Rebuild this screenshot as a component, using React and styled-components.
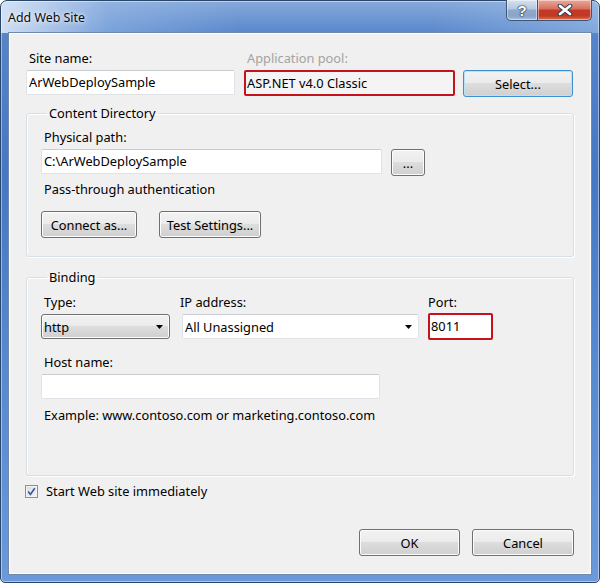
import React from "react";
import styled, { createGlobalStyle } from "styled-components";

const GlobalStyle = createGlobalStyle`
  html, body {
    margin: 0;
    padding: 0;
    background: #ffffff;
  }
  body {
    font-family: "Noto Sans", "Open Sans", sans-serif;
    font-size: 12.8px;
    color: #000;
  }
`;

const Window = styled.div`
  box-sizing: border-box;
  width: 600px;
  height: 583px;
  border: 1px solid #2a4769;
  border-radius: 7px 7px 5px 5px;
  padding: 0 7px 7px 7px;
  display: flex;
  flex-direction: column;
  background:
    linear-gradient(90deg, rgba(220, 232, 248, 0.9) 0%, rgba(160, 192, 234, 0.45) 18%, rgba(80, 128, 200, 0) 40%, rgba(80, 128, 200, 0) 72%, rgba(170, 200, 236, 0.5) 100%) top / 100% 32px no-repeat,
    linear-gradient(180deg, #86a9da 0%, #5584cb 6%, #4677c4 30%, #5588d0 60%, #6b99da 100%);
  box-shadow: inset 0 0 0 1px rgba(255, 255, 255, 0.45);
`;

const TitleBar = styled.div`
  height: 31px;
  flex: none;
  display: flex;
  justify-content: space-between;
  align-items: flex-start;
`;

const Title = styled.div`
  padding-top: 8px;
  font-size: 12.4px;
  color: #0b0b0b;
  text-shadow: 0 0 6px rgba(255, 255, 255, 0.9), 0 0 3px rgba(255, 255, 255, 0.8);
`;

const CaptionButtons = styled.div`
  display: flex;
  margin-top: -1px;
`;

const CaptionButton = styled.div`
  box-sizing: border-box;
  width: ${p => p.w}px;
  height: 21px;
  display: flex;
  align-items: center;
  justify-content: center;
  border: 1px solid #3d5575;
  border-top: none;
  border-radius: ${p => (p.close ? "0 0 5px 0" : "0 0 0 5px")};
  margin-left: ${p => (p.close ? "-1px" : "0")};
  background: ${p =>
    p.close
      ? "linear-gradient(180deg, #e9a99b 0%, #d7705f 45%, #c4392a 50%, #c13a22 80%, #dc7452 100%)"
      : "linear-gradient(180deg, #d6e2f0 0%, #b3c7e0 45%, #8ea9cb 50%, #88a4c8 80%, #a9c2e0 100%)"};
  box-shadow: inset 0 0 0 1px rgba(255, 255, 255, 0.45);
  color: #fff;
  font-family: "Liberation Sans", Arial, sans-serif;
  font-weight: bold;
  font-size: 15px;
  text-shadow: 0 0 1px #1d2f48, 0 0 1px #1d2f48, 0 0 2px #1d2f48;
`;

const Client = styled.div`
  flex: 1;
  box-sizing: border-box;
  background: #f0f0f0;
  border: 1px solid #6e87aa;
  box-shadow: inset 0 0 0 1px #ffffff;
  padding: 17px 17px 0 17px;
  display: flex;
  flex-direction: column;
`;

const TopGrid = styled.div`
  display: grid;
  grid-template-columns: 209px 211px 110px;
  column-gap: 9px;
  align-items: start;
  & > :nth-child(3) {
    margin-left: -1px;
    margin-top: 20px;
  }
`;

const Field = styled.div`
  display: flex;
  flex-direction: column;
`;

const Label = styled.div`
  line-height: 16px;
  height: 16px;
  margin: ${p => p.mt || 0}px 0 ${p => p.mb ?? 4}px ${p => p.offset ?? 3}px;
  color: ${p => (p.disabled ? "#a3a3a3" : "#000")};
  white-space: nowrap;
`;

const TextBox = styled.div`
  box-sizing: border-box;
  width: ${p => p.w}px;
  height: ${p => (p.red ? 26 : 25)}px;
  line-height: 23px;
  padding-left: ${p => (p.red ? 1 : 2)}px;
  background: ${p => (p.readOnly ? "#f4f4f4" : "#ffffff")};
  border: ${p => (p.red ? "2px solid #c4131d" : "1px solid #dfe3e8")};
  border-top-color: ${p => (p.red ? "#c4131d" : "#c9cdd2")};
  border-radius: 2px;
  white-space: nowrap;
  overflow: hidden;
`;

const Button = styled.button`
  box-sizing: border-box;
  width: ${p => p.w}px;
  height: 27px;
  padding: 0;
  font-family: inherit;
  font-size: 12.8px;
  color: #000;
  border: 1px solid ${p => (p.primary ? "#3c8fd0" : "#707070")};
  border-radius: 3px;
  background: linear-gradient(180deg, #f2f2f2 0%, #ebebeb 48%, #dddddd 50%, #cfcfcf 100%);
  box-shadow: inset 0 0 0 1px ${p => (p.primary ? "#b9e2f8" : "#fcfcfc")};
`;

const Group = styled.fieldset`
  margin: ${p => p.top}px 0 0 0;
  padding: ${p => p.pt}px 14px ${p => p.pb}px 14px;
  border: 1px solid #d5dfe5;
  border-radius: 3px;
  box-shadow: inset 1px 1px 0 #ffffff, 1px 1px 0 #ffffff;
  min-width: 0;
`;

const Legend = styled.legend`
  padding: 0 2px;
  margin-left: 6px;
  line-height: 16px;
`;

const Row = styled.div`
  display: flex;
  align-items: ${p => p.align || "flex-start"};
  gap: ${p => p.gap || 0}px;
  margin-top: ${p => p.mt || 0}px;
`;

const Text = styled.div`
  line-height: 16px;
  margin-top: ${p => p.mt || 0}px;
  margin-left: 3px;
  white-space: nowrap;
`;

const ComboBox = styled.div`
  box-sizing: border-box;
  width: ${p => p.w}px;
  height: 25px;
  display: flex;
  align-items: center;
  justify-content: space-between;
  padding: 0 6px 0 2px;
  border: 1px solid ${p => (p.dropList ? "#707070" : "#dfe3e8")};
  border-top-color: ${p => (p.dropList ? "#707070" : "#c9cdd2")};
  border-radius: ${p => (p.dropList ? 3 : 2)}px;
  background: ${p =>
    p.dropList
      ? "linear-gradient(180deg, #f2f2f2 0%, #ebebeb 48%, #dddddd 50%, #cfcfcf 100%)"
      : "#ffffff"};
  box-shadow: ${p => (p.dropList ? "inset 0 0 0 1px #fcfcfc" : "none")};
`;

const Arrow = () => (
  <svg width="7" height="4" viewBox="0 0 7 4">
    <path d="M0 0 H7 L3.5 4 Z" fill="#000" />
  </svg>
);

const HelpGlyph = styled.span`
  line-height: 1;
`;

const CloseGlyph = () => (
  <svg width="16" height="12" viewBox="0 0 16 12">
    <path d="M3 2 L13 10 M13 2 L3 10" stroke="#2a3c55" strokeWidth="4.6" strokeLinecap="round" />
    <path d="M3 2 L13 10 M13 2 L3 10" stroke="#ffffff" strokeWidth="2.8" strokeLinecap="round" />
  </svg>
);

const CheckBox = styled.div`
  box-sizing: border-box;
  width: 13px;
  height: 13px;
  border: 1px solid #8e8f8f;
  background: linear-gradient(135deg, #dcdcdc 0%, #f4f4f4 100%);
  box-shadow: inset 0 0 0 1px #f4f4f4;
  display: flex;
  align-items: center;
  justify-content: center;
  margin-left: -1px;
`;

const Check = () => (
  <svg width="9" height="9" viewBox="0 0 9 9">
    <path d="M1.2 4.6 L3.4 7.4 L7.8 1.2" fill="none" stroke="#3454a0" strokeWidth="1.6" />
  </svg>
);

const CheckLabel = styled.span`
  line-height: 16px;
  margin-left: 8px;
`;

const Footer = styled.div`
  display: flex;
  justify-content: flex-end;
  gap: 12px;
  margin-top: 30px;
`;

export default function App() {
  return (
    <>
      <GlobalStyle />
      <Window>
        <TitleBar>
          <Title>Add Web Site</Title>
          <CaptionButtons>
            <CaptionButton w={32}>
              <HelpGlyph>?</HelpGlyph>
            </CaptionButton>
            <CaptionButton w={55} close>
              <CloseGlyph />
            </CaptionButton>
          </CaptionButtons>
        </TitleBar>
        <Client>
          <TopGrid>
            <Field>
              <Label>Site name:</Label>
              <TextBox w={209}>ArWebDeploySample</TextBox>
            </Field>
            <Field>
              <Label disabled>Application pool:</Label>
              <TextBox w={211} red readOnly>ASP.NET v4.0 Classic</TextBox>
            </Field>
            <Button w={110} primary>Select...</Button>
          </TopGrid>

          <Group top={8} pt={8} pb={18}>
            <Legend>Content Directory</Legend>
            <Label>Physical path:</Label>
            <Row gap={9}>
              <TextBox w={341}>C:\ArWebDeploySample</TextBox>
              <Button w={34}>...</Button>
            </Row>
            <Text mt={5}>Pass-through authentication</Text>
            <Row gap={22} mt={14}>
              <Button w={96}>Connect as...</Button>
              <Button w={102}>Test Settings...</Button>
            </Row>
          </Group>

          <Group top={12} pt={9} pb={52}>
            <Legend>Binding</Legend>
            <Row align="flex-end">
              <Field>
                <Label>Type:</Label>
                <ComboBox w={129} dropList>
                  <span>http</span>
                  <Arrow />
                </ComboBox>
              </Field>
              <Field style={{ marginLeft: 12 }}>
                <Label offset={-2}>IP address:</Label>
                <ComboBox w={237}>
                  <span>All Unassigned</span>
                  <Arrow />
                </ComboBox>
              </Field>
              <Field style={{ marginLeft: 9, marginBottom: -1 }}>
                <Label offset={0} mb={3}>Port:</Label>
                <TextBox w={65} red style={{ height: 27 }}>8011</TextBox>
              </Field>
            </Row>
            <Label mt={15}>Host name:</Label>
            <TextBox w={339} />
            <Text mt={8}>Example: www.contoso.com or marketing.contoso.com</Text>
          </Group>

          <Row align="center" mt={7}>
            <CheckBox>
              <Check />
            </CheckBox>
            <CheckLabel>Start Web site immediately</CheckLabel>
          </Row>

          <Footer>
            <Button w={101}>OK</Button>
            <Button w={102}>Cancel</Button>
          </Footer>
        </Client>
      </Window>
    </>
  );
}
